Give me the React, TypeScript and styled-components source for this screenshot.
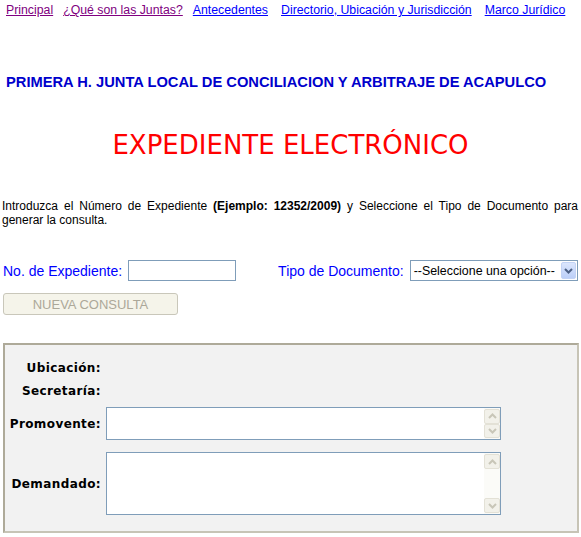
import React from "react";
import styled, { createGlobalStyle } from "styled-components";

const Global = createGlobalStyle`
  html, body { margin: 0; padding: 0; background: #ffffff; }
  body { font-family: "Liberation Sans", Arial, sans-serif; }
`;

const Page = styled.div`
  width: 581px;
  height: 537px;
  overflow: hidden;
  box-sizing: border-box;
`;

const Nav = styled.nav`
  display: flex;
  padding: 3px 0 0 6px;
  height: 15px;
  font-size: 12.3px;
  line-height: 14px;
`;

const NavLink = styled.a<{ $visited?: boolean; $gap: number }>`
  color: ${(p) => (p.$visited ? "#800080" : "#0000ff")};
  text-decoration: underline;
  margin-right: ${(p) => p.$gap}px;
  white-space: nowrap;
`;

const Heading = styled.h2`
  margin: 56px 0 0 6px;
  font-family: "Liberation Sans", Arial, sans-serif;
  font-weight: bold;
  font-size: 14.7px;
  line-height: 16px;
  color: #0000cc;
  white-space: nowrap;
`;

const Title = styled.h1`
  margin: 40px 0 0 0;
  text-align: center;
  font-family: "DejaVu Sans", Verdana, sans-serif;
  font-weight: normal;
  font-size: 26px;
  line-height: 30px;
  color: #ff0000;
`;

const Intro = styled.p`
  margin: 39px 3px 0 2px;
  font-size: 12px;
  line-height: 14px;
  text-align: justify;
  color: #000000;
`;

const FormRow = styled.div`
  display: flex;
  align-items: center;
  margin: 33px 0 0 3px;
  height: 21px;
`;

const FieldLabel = styled.label<{ $ml?: number }>`
  font-size: 14px;
  color: #0000ff;
  margin-left: ${(p) => p.$ml ?? 0}px;
  margin-right: 6px;
  white-space: nowrap;
`;

const TextInput = styled.input`
  box-sizing: border-box;
  width: 108px;
  height: 21px;
  border: 1px solid #7f9db9;
  padding: 1px 3px;
  font-family: "Liberation Sans", Arial, sans-serif;
  font-size: 13px;
  margin: 0;
`;

const SelectBox = styled.div`
  box-sizing: border-box;
  width: 168px;
  height: 21px;
  border: 1px solid #7f9db9;
  display: flex;
  align-items: center;
  background: #ffffff;
`;

const SelectText = styled.span`
  flex: 1;
  padding-left: 3px;
  font-size: 12.4px;
  color: #000000;
  white-space: nowrap;
  overflow: hidden;
`;

const SelectArrow = styled.span`
  width: 15px;
  height: 17px;
  margin-right: 1px;
  display: flex;
  align-items: center;
  justify-content: center;
  background: linear-gradient(#dbe6fd, #bccff8);
  border: 1px solid #c3d3f5;
  box-sizing: border-box;
  border-radius: 2px;
  flex-shrink: 0;
`;

const DisabledButton = styled.button`
  display: block;
  margin: 12px 0 0 3px;
  width: 175px;
  height: 22px;
  background: #f5f4ea;
  border: 1px solid #c9c7ba;
  border-radius: 3px;
  color: #aca899;
  font-family: "Liberation Sans", Arial, sans-serif;
  font-size: 13px;
  padding: 0;
`;

const Panel = styled.div`
  box-sizing: border-box;
  margin: 28px 0 0 3px;
  width: 576px;
  height: 190px;
  background: #f2f2f2;
  border: 2px solid #aeaa99;
  border-right-color: #c7c4b6;
  border-bottom-color: #c7c4b6;
  padding-top: 12px;
`;

const PanelRow = styled.div<{ $h: number; $mt?: number }>`
  display: flex;
  align-items: center;
  height: ${(p) => p.$h}px;
  margin-top: ${(p) => p.$mt ?? 0}px;
`;

const PanelLabel = styled.span`
  width: 96px;
  text-align: right;
  font-family: "DejaVu Sans", Tahoma, sans-serif;
  font-weight: bold;
  font-size: 12px;
  letter-spacing: 0.4px;
  color: #000000;
  margin-right: 5px;
  white-space: nowrap;
`;

const TextArea = styled.div<{ $h: number }>`
  box-sizing: border-box;
  width: 395px;
  height: ${(p) => p.$h}px;
  background: #ffffff;
  border: 1px solid #7f9db9;
  display: flex;
  justify-content: flex-end;
`;

const ScrollBar = styled.div`
  width: 16px;
  display: flex;
  flex-direction: column;
  justify-content: space-between;
  background: #fbfbf8;
  padding: 1px 0;
`;

const ScrollButton = styled.span`
  box-sizing: border-box;
  width: 16px;
  height: 15px;
  display: flex;
  align-items: center;
  justify-content: center;
  background: #f2f1ea;
  border: 1px solid #e3e1d6;
  border-radius: 2px;
`;

const Chevron = ({ up, color }: { up?: boolean; color: string }) => (
  <svg width="9" height="6" viewBox="0 0 9 6">
    <path
      d={up ? "M1 5 L4.5 1.5 L8 5" : "M1 1 L4.5 4.5 L8 1"}
      fill="none"
      stroke={color}
      strokeWidth="2"
    />
  </svg>
);

const Scroll = () => (
  <ScrollBar>
    <ScrollButton>
      <Chevron up color="#c8c6b8" />
    </ScrollButton>
    <ScrollButton>
      <Chevron color="#c8c6b8" />
    </ScrollButton>
  </ScrollBar>
);

export default function App() {
  return (
    <Page>
      <Global />
      <Nav>
        <NavLink href="#" $visited $gap={10}>Principal</NavLink>
        <NavLink href="#" $visited $gap={10}>¿Qué son las Juntas?</NavLink>
        <NavLink href="#" $gap={13}>Antecedentes</NavLink>
        <NavLink href="#" $gap={13}>Directorio, Ubicación y Jurisdicción</NavLink>
        <NavLink href="#" $gap={0}>Marco Jurídico</NavLink>
      </Nav>
      <Heading>PRIMERA H. JUNTA LOCAL DE CONCILIACION Y ARBITRAJE DE ACAPULCO</Heading>
      <Title>EXPEDIENTE ELECTRÓNICO</Title>
      <Intro>
        Introduzca el Número de Expediente <b>(Ejemplo: 12352/2009)</b> y Seleccione el Tipo de
        Documento para generar la consulta.
      </Intro>
      <FormRow>
        <FieldLabel>No. de Expediente:</FieldLabel>
        <TextInput type="text" />
        <FieldLabel $ml={42}>Tipo de Documento:</FieldLabel>
        <SelectBox>
          <SelectText>--Seleccione una opción--</SelectText>
          <SelectArrow>
            <Chevron color="#4d6185" />
          </SelectArrow>
        </SelectBox>
      </FormRow>
      <DisabledButton disabled>NUEVA CONSULTA</DisabledButton>
      <Panel>
        <PanelRow $h={22}>
          <PanelLabel>Ubicación:</PanelLabel>
        </PanelRow>
        <PanelRow $h={22} $mt={1}>
          <PanelLabel>Secretaría:</PanelLabel>
        </PanelRow>
        <PanelRow $h={33} $mt={5}>
          <PanelLabel>Promovente:</PanelLabel>
          <TextArea $h={33}>
            <Scroll />
          </TextArea>
        </PanelRow>
        <PanelRow $h={63} $mt={12}>
          <PanelLabel>Demandado:</PanelLabel>
          <TextArea $h={63}>
            <Scroll />
          </TextArea>
        </PanelRow>
      </Panel>
    </Page>
  );
}
